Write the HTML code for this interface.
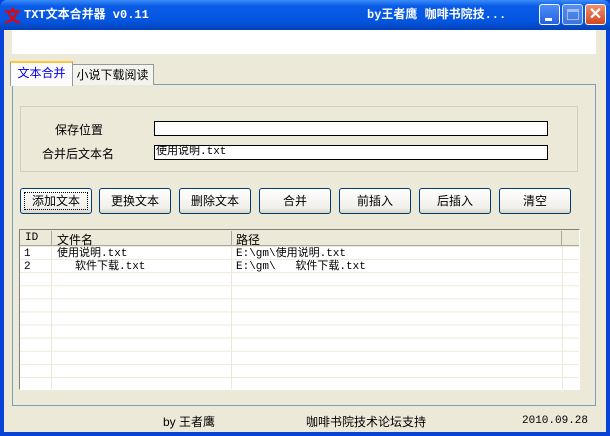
<!DOCTYPE html>
<html><head><meta charset="utf-8"><style>
*{margin:0;padding:0;box-sizing:border-box}
body{width:610px;height:436px;overflow:hidden;background:#0842d6;font-family:"Liberation Sans","Noto Sans CJK SC","WenQuanYi Zen Hei",sans-serif;font-size:12px;color:#000;position:relative}
.title{position:absolute;left:0;top:0;width:610px;height:30px;background:linear-gradient(#3a8cf8,#0a5ce6 20%,#0456e0 70%,#0340b8);border-radius:7px 7px 0 0}
.client{position:absolute;left:4px;top:30px;width:602px;height:402px;background:#ece9d8}
.a{position:absolute}
.m{font-family:"Liberation Mono","Noto Sans CJK SC",monospace;font-size:11px;line-height:13px;white-space:pre}
.tb{position:absolute;top:4px;width:21px;height:21px;border:1px solid #fff;border-radius:3px;background:linear-gradient(#4c8ff8,#2360e0)}
.btn{position:absolute;top:188px;height:26px;width:72px;border:1px solid #003c74;border-radius:3px;background:linear-gradient(#fff,#f0efe8 80%,#d8d4c4);text-align:center;line-height:24px;font-size:12px}
</style></head><body>
<div class="title"></div>
<div class="a" style="left:4px;top:5px;color:#e00;font-weight:bold;font-size:17px;font-family:'Noto Sans CJK SC',sans-serif;line-height:20px">文</div>
<div class="a" style="left:24px;top:7px;color:#fff;font-weight:bold;font-size:12px;font-family:'Liberation Mono','Noto Sans CJK SC',monospace;line-height:16px">TXT文本合并器 v0.11</div>
<div class="a" style="left:367px;top:7px;color:#fff;font-weight:bold;font-size:12px;font-family:'Liberation Mono','Noto Sans CJK SC',monospace;line-height:16px">by王者鹰 咖啡书院技...</div>
<div class="tb" style="left:539px"><div class="a" style="left:5px;top:13px;width:7px;height:3px;background:#fff"></div></div>
<div class="tb" style="left:562px;background:linear-gradient(#6a9cf0,#4a7ce0);opacity:.8"><div class="a" style="left:4px;top:4px;width:12px;height:11px;border:1px solid #c8d8f8;border-top-width:3px"></div></div>
<div class="tb" style="left:585px;background:linear-gradient(#f09070,#d04820)"><div class="a" style="left:0;top:-1px;width:19px;text-align:center;color:#fff;font-weight:bold;font-size:16px">✕</div></div>
<div class="client"></div>
<div class="a" style="left:12px;top:30px;width:584px;height:24px;background:#fff"></div>
<div class="a" style="left:12px;top:84px;width:584px;height:322px;border:1px solid #7f9db9"></div>
<div class="a" style="left:71px;top:64px;width:83px;height:21px;border:1px solid #919b9c;border-bottom:none;background:#f4f3ee;line-height:20px;text-align:center">小说下载阅读</div>
<div class="a" style="left:10px;top:61px;width:63px;height:25px;border:1px solid #919b9c;border-top:2px solid #ffc83c;border-bottom:none;background:#fcfcfe;color:#0000e0;line-height:21px;text-align:center">文本合并</div>
<div class="a" style="left:20px;top:106px;width:558px;height:66px;border:1px solid #d0d0bf"></div>
<div class="a" style="left:55px;top:121px">保存位置</div>
<div class="a" style="left:42px;top:145px">合并后文本名</div>
<div class="a" style="left:154px;top:121px;width:394px;height:15px;border:1px solid #000;background:#fff"></div>
<div class="a m" style="left:154px;top:145px;width:394px;height:15px;border:1px solid #000;background:#fff;padding-left:1px">使用说明.txt</div>
<div class="btn" style="left:20px"><div style="margin:3px;border:1px dotted #000;line-height:16px">添加文本</div></div>
<div class="btn" style="left:99px">更换文本</div>
<div class="btn" style="left:179px">删除文本</div>
<div class="btn" style="left:259px">合并</div>
<div class="btn" style="left:339px">前插入</div>
<div class="btn" style="left:419px">后插入</div>
<div class="btn" style="left:499px">清空</div>
<div class="a" style="left:19px;top:229px;width:561px;height:161px;border:1px solid #808080;border-right-color:#fff;border-bottom-color:#fff;background:#fff;overflow:hidden;
background-image:linear-gradient(#ece9d8 1px,transparent 1px),linear-gradient(90deg,transparent 31px,#ece9d8 31px,#ece9d8 32px,transparent 32px,transparent 211px,#ece9d8 211px,#ece9d8 212px,transparent 212px,transparent 542px,#ece9d8 542px,#ece9d8 543px,transparent 543px);background-size:100% 13.1px,100% 100%;background-position:0 16px,0 0">
<div class="a" style="left:0;top:0;width:560px;height:16px;background:#ece9d8;border-bottom:1px solid #aca899"></div>
<div class="a m" style="left:5px;top:2px">ID</div>
<div class="a" style="left:31px;top:1px;width:1px;height:14px;background:#aca899"></div>
<div class="a" style="left:37px;top:1px">文件名</div>
<div class="a" style="left:211px;top:1px;width:1px;height:14px;background:#aca899"></div>
<div class="a" style="left:216px;top:1px">路径</div>
<div class="a" style="left:541px;top:1px;width:1px;height:14px;background:#aca899"></div>
<div class="a m" style="left:4px;top:18px">1</div>
<div class="a m" style="left:37px;top:18px">使用说明.txt</div>
<div class="a m" style="left:216px;top:18px">E:\gm\使用说明.txt</div>
<div class="a m" style="left:4px;top:31px">2</div>
<div class="a m" style="left:55px;top:31px">软件下载.txt</div>
<div class="a m" style="left:216px;top:31px">E:\gm\   软件下载.txt</div>
</div>
<div class="a" style="left:163px;top:413px">by 王者鹰</div>
<div class="a" style="left:306px;top:413px">咖啡书院技术论坛支持</div>
<div class="a m" style="left:522px;top:415px">2010.09.28</div>
</body></html>
